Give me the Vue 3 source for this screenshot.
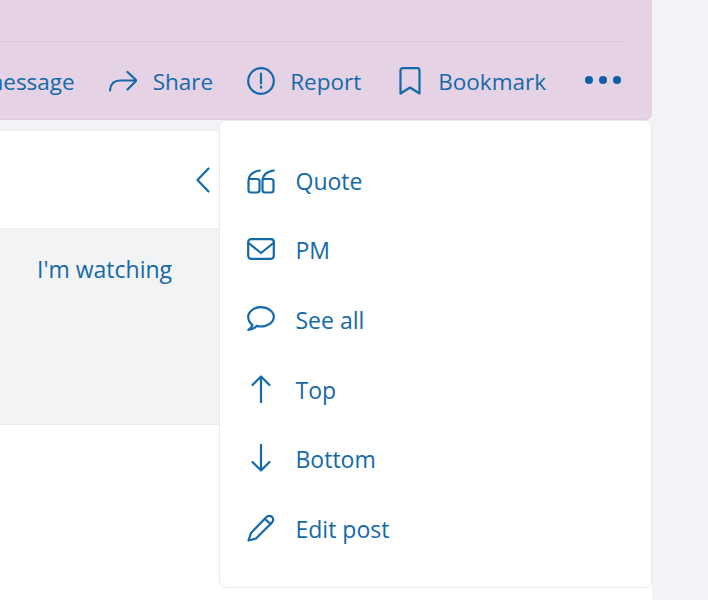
<script setup>
const menuItems = [
  { label: 'Quote', icon: 'quote' },
  { label: 'PM', icon: 'mail' },
  { label: 'See all', icon: 'chat' },
  { label: 'Top', icon: 'up' },
  { label: 'Bottom', icon: 'down' },
  { label: 'Edit post', icon: 'pencil' },
];
</script>

<template>
  <div class="page">
    <section class="post">
      <div class="post__rule"></div>
      <div class="post__actions">
        <a class="action">message</a>
        <a class="action action--share">
          <svg class="action__icon action__icon--share" viewBox="0 0 28 22">
            <path d="M1 20.500C1.500 14 5 10.500 11 10.500H27M18.500 2L27.500 10.500L18.500 19.500" />
          </svg>
          Share
        </a>
        <a class="action">
          <svg class="action__icon action__icon--report" viewBox="0 0 28 28">
            <circle cx="14" cy="14" r="12.800" />
            <path d="M14 6.500V16.500M14 19.500V20.800" />
          </svg>
          Report
        </a>
        <a class="action action--bookmark">
          <svg class="action__icon action__icon--bookmark" viewBox="0 0 22 28">
            <path d="M1.500 3.500Q1.500 1.200 3.800 1.200H18.200Q20.500 1.200 20.500 3.500V26.500L11 20.500L1.500 26.500Z" />
          </svg>
          Bookmark
        </a>
        <button class="more" aria-label="More">
          <span></span><span></span><span></span>
        </button>
      </div>

      <nav class="menu">
        <a v-for="item in menuItems" :key="item.label" class="menu__item">
          <span class="menu__icon">
            <svg v-if="item.icon === 'quote'" viewBox="0 -4 28 29">
              <path d="M12.800 1.500C6.500 2.500 1.500 6 1.500 12V21Q1.500 23.500 4 23.500H10Q12.500 23.500 12.500 21V12.500Q12.500 10 10 10H2" />
              <path d="M26.800 1.500C20.500 2.500 15.500 6 15.500 12V21Q15.500 23.500 18 23.500H24Q26.500 23.500 26.500 21V12.500Q26.500 10 24 10H16" />
            </svg>
            <svg v-else-if="item.icon === 'mail'" viewBox="0 0 28 22">
              <rect x="1.200" y="1.200" width="25.600" height="19.600" rx="3" />
              <path d="M1.500 5L14 15L26.500 5" />
            </svg>
            <svg v-else-if="item.icon === 'chat'" viewBox="0 0 28 26">
              <path d="M5.500 19C2.800 17 1.200 14 1.200 10.800C1.200 5.500 7 1.200 14 1.200S26.800 5.500 26.800 10.800S21 20.500 14 20.500C12.500 20.500 11 20.300 9.800 19.900C7.500 22 4.500 23.800 1.300 24C3.500 22.500 5 21 5.500 19Z" />
            </svg>
            <svg v-else-if="item.icon === 'up'" viewBox="0 0 28 28">
              <path d="M14 27V1.500M5.500 10L14 1.500L22.500 10" />
            </svg>
            <svg v-else-if="item.icon === 'down'" viewBox="0 0 28 28">
              <path d="M14 1V26.500M5.500 18L14 26.500L22.500 18" />
            </svg>
            <svg v-else viewBox="0 0 28 28">
              <path d="M1.500 26.500L4 19L19.500 3Q22 1 24.500 2.500L25.500 3.500Q27 6 25 8.500L9 24.500Z" />
              <path d="M18 5L23.500 10" />
            </svg>
          </span>
          {{ item.label }}
        </a>
      </nav>
    </section>

    <section class="thread">
      <div class="thread__head">
        <svg class="thread__chevron" viewBox="0 0 14 26">
          <path d="M12.500 1.500L1.500 13L12.500 24.500" />
        </svg>
      </div>
      <div class="thread__tabs">
        <a class="thread__tab">I'm watching</a>
      </div>
    </section>
  </div>
</template>

<style>
html,
body {
  background: #f2f3f6;
}
</style>

<style scoped>
.page {
  width: 652px;
  height: 600px;
  font-family: "Open Sans", "Noto Sans", sans-serif;
  font-size: 23px;
  color: #1469a8;
}

svg {
  fill: none;
  stroke: currentColor;
  stroke-width: 2.200;
  stroke-linecap: round;
  stroke-linejoin: round;
  display: block;
}

.post {
  position: relative;
  height: 120px;
  background: #e5d2e5;
  border-radius: 0 0 7px 0;
  box-shadow: inset 0 -1px 0 #dccbdf;
}

.post__rule {
  height: 41px;
  margin-right: 28px;
  border-bottom: 1px solid #d8c6d9;
}

.post__actions {
  height: 78px;
  padding-right: 31px;
  display: flex;
  justify-content: flex-end;
  align-items: center;
  gap: 34px;
  overflow: hidden;
  font-size: 22.500px;
}

.action {
  display: flex;
  align-items: center;
  gap: 15px;
  white-space: nowrap;
  flex-shrink: 0;
}

.action--share {
  gap: 16px;
}

.action--bookmark {
  margin-left: 4px;
  gap: 17px;
}

.action__icon--share {
  width: 28px;
  height: 22px;
}

.action__icon--report {
  width: 28px;
  height: 28px;
}

.action__icon--bookmark {
  width: 22px;
  height: 28px;
}

.more {
  display: flex;
  gap: 6px;
  margin: -3px 0 0 5px;
  padding: 0;
  border: 0;
  background: none;
}

.more span {
  width: 8px;
  height: 8px;
  border-radius: 50%;
  background: #0c5fa3;
}

.menu {
  position: absolute;
  top: 120px;
  right: 0;
  width: 433px;
  height: 468px;
  box-sizing: border-box;
  padding: 25px 0 0 27px;
  background: #fff;
  border: 1px solid #e9eaee;
  border-radius: 7px;
  z-index: 2;
}

.menu__item {
  height: 69.600px;
  display: flex;
  align-items: center;
  gap: 20.500px;
}

.menu__icon {
  width: 28px;
  margin-top: -2px;
  display: flex;
  justify-content: center;
}

.menu__icon svg {
  width: 28px;
  height: auto;
}

.thread {
  margin-top: 10px;
  height: 470px;
  background: #fff;
  border-top: 1px solid #e9eaee;
}

.thread__head {
  height: 97px;
  display: flex;
  align-items: center;
  padding-left: 196px;
}

.thread__chevron {
  width: 14px;
  height: 26px;
}

.thread__tabs {
  height: 197px;
  box-sizing: border-box;
  padding: 24px 0 0 37px;
  background: #f2f3f5;
  border-top: 1px solid #eceef1;
  border-bottom: 1px solid #e9eaee;
}
</style>
